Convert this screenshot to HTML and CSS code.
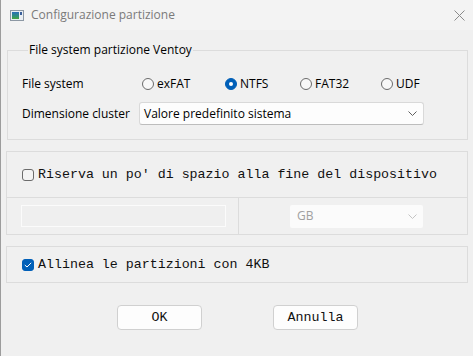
FILE: index.html
```html
<!DOCTYPE html>
<html lang="it">
<head>
<meta charset="utf-8">
<title>Configurazione partizione</title>
<link rel="stylesheet" href="styles.css">
</head>
<body>
<div class="window">
  <div class="titlebar">
    <svg class="app-icon" width="14" height="11" viewBox="0 0 14 11">
      <rect x="0.5" y="0.5" width="13" height="10" fill="#e9eef3" stroke="#8d98a4"/>
      <defs>
        <linearGradient id="g" x1="0" y1="0" x2="0" y2="1">
          <stop offset="0" stop-color="#2a6fb8"/>
          <stop offset="0.6" stop-color="#2f8f7a"/>
          <stop offset="1" stop-color="#49a53a"/>
        </linearGradient>
      </defs>
      <rect x="2" y="2" width="7" height="7" fill="url(#g)"/>
      <rect x="10" y="2" width="2" height="3" fill="#3a5f9a"/>
    </svg>
    <span class="title">Configurazione partizione</span>
    <svg class="close" width="11" height="11" viewBox="0 0 11 11">
      <path d="M0.5 0.5 L10.5 10.5 M10.5 0.5 L0.5 10.5" stroke="#8a8a8a" stroke-width="1" fill="none"/>
    </svg>
  </div>
  <div class="content">
    <fieldset class="group">
      <legend>File system partizione Ventoy</legend>
      <div class="form-grid">
        <span class="label">File system</span>
        <div class="radios">
          <label class="radio"><span class="dot"></span>exFAT</label>
          <label class="radio"><span class="dot checked"></span>NTFS</label>
          <label class="radio"><span class="dot"></span>FAT32</label>
          <label class="radio"><span class="dot"></span>UDF</label>
        </div>
        <span class="label">Dimensione cluster</span>
        <div class="combo">
          <span>Valore predefinito sistema</span>
          <svg class="chev" width="9" height="5" viewBox="0 0 9 5"><path d="M0.5 0.5 L4.5 4.5 L8.5 0.5" stroke="#5f5f5f" fill="none"/></svg>
        </div>
      </div>
    </fieldset>

    <div class="panel">
      <div class="panel-row">
        <label class="check"><span class="box"></span>Riserva un po' di spazio alla fine del dispositivo</label>
      </div>
      <div class="panel-split">
        <div class="cell cell-left"><div class="edit"></div></div>
        <div class="cell"><div class="combo-off"><span>GB</span><svg class="chev" width="9" height="5" viewBox="0 0 9 5"><path d="M0.5 0.5 L4.5 4.5 L8.5 0.5" stroke="#c4c4c4" fill="none"/></svg></div></div>
      </div>
    </div>

    <div class="panel">
      <div class="panel-row short">
        <label class="check"><span class="box checked"><svg width="8" height="6" viewBox="0 0 8 6"><path d="M0.8 3 L3 5 L7.2 0.8" stroke="#fff" stroke-width="1" fill="none"/></svg></span>Allinea le partizioni con 4KB</label>
      </div>
    </div>

    <div class="buttons">
      <button class="btn">OK</button>
      <button class="btn">Annulla</button>
    </div>
  </div>
</div>
</body>
</html>
```

FILE: styles.css
```css
* { box-sizing: border-box; }
html, body { margin: 0; padding: 0; }
body {
  background: #f0f0f0;
  font-family: "Open Sans", "Liberation Sans", sans-serif;
  font-size: 12px;
  color: #000;
}
.window {
  width: 473px;
  height: 356px;
  border-left: 1px solid #9c9c9c;
  background: #f0f0f0;
}
.titlebar {
  height: 30px;
  background: #f3f3f3;
  display: flex;
  align-items: center;
  padding-left: 9px;
}
.app-icon { display: block; }
.title {
  margin-left: 7px;
  color: #7a7a7a;
  font-size: 12px;
  line-height: 16px;
}
.close { margin-left: auto; margin-right: 8px; }
.content { display: flex; flex-direction: column; }

.group {
  margin: 12px 0 0 6px;
  width: 461px;
  border: 1px solid #dcdcdc;
  padding: 14px 0 14px 14px;
  min-width: 0;
}
.group legend {
  margin-left: 6px;
  padding: 0 1px;
  line-height: 16px;
  font-size: 12px;
}
.form-grid {
  display: grid;
  grid-template-columns: 117px auto;
  grid-template-rows: 23px 23px;
  row-gap: 7px;
  align-items: center;
}
.label { line-height: 16px; }
.radios {
  display: grid;
  grid-template-columns: 83px 75px 81px auto;
  align-items: center;
}
.radio { display: flex; align-items: center; line-height: 16px; }
.dot {
  width: 12px;
  height: 12px;
  margin-left: 3px;
  margin-right: 3px;
  border: 1px solid #6b6b6b;
  border-radius: 50%;
  background: #f8f8f8;
  position: relative;
}
.dot.checked {
  background: #005fb8;
  border-color: #005fb8;
}
.dot.checked::after {
  content: "";
  position: absolute;
  left: 3px; top: 3px;
  width: 4px; height: 4px;
  border-radius: 50%;
  background: #fff;
}
.combo {
  width: 285px;
  height: 23px;
  background: #fdfdfd;
  border: 1px solid #d9d9d9;
  border-bottom-color: #bdbdbd;
  border-radius: 3px;
  display: flex;
  align-items: center;
  padding: 0 6px 0 4px;
  line-height: 16px;
}
.chev { margin-left: auto; display: block; }

.panel {
  margin: 11px 0 0 5px;
  width: 462px;
  border: 1px solid #dcdcdc;
}
.panel-row {
  height: 45px;
  display: flex;
  align-items: center;
  padding-left: 15px;
}
.panel-row.short { height: 35px; }
.check {
  display: flex;
  align-items: center;
  font-family: "Liberation Mono", "Courier New", monospace;
  font-size: 13.3px;
  line-height: 16px;
  color: #111;
}
.box {
  width: 12px;
  height: 12px;
  border: 1px solid #6b6b6b;
  border-radius: 3px;
  margin-right: 4px;
  background: #f3f3f3;
  display: flex;
  align-items: center;
  justify-content: center;
}
.box.checked {
  background: #005fb8;
  border-color: #005fb8;
}
.panel-split {
  display: grid;
  grid-template-columns: 232px auto;
  border-top: 1px solid #dcdcdc;
  height: 37px;
}
.cell { display: flex; align-items: center; }
.cell-left { border-right: 1px solid #dcdcdc; padding-left: 14px; }
.edit {
  width: 205px;
  height: 22px;
  border: 1px solid #fbfbfb;
  background: #efefef;
}
.cell .combo-off {
  margin-left: 51px;
  width: 133px;
  height: 23px;
  background: #fbfbfb;
  border-radius: 2px;
  display: flex;
  align-items: center;
  padding: 0 6px 0 7px;
  color: #a0a0a0;
  line-height: 16px;
}
.buttons {
  display: flex;
  margin-top: 22px;
  padding-left: 116px;
  gap: 71px;
}
.btn {
  width: 85px;
  height: 25px;
  background: #fdfdfd;
  border: 1px solid #d0d0d0;
  border-radius: 4px;
  font-family: "Liberation Mono", "Courier New", monospace;
  font-size: 13.3px;
  color: #111;
  padding: 0;
}
```
